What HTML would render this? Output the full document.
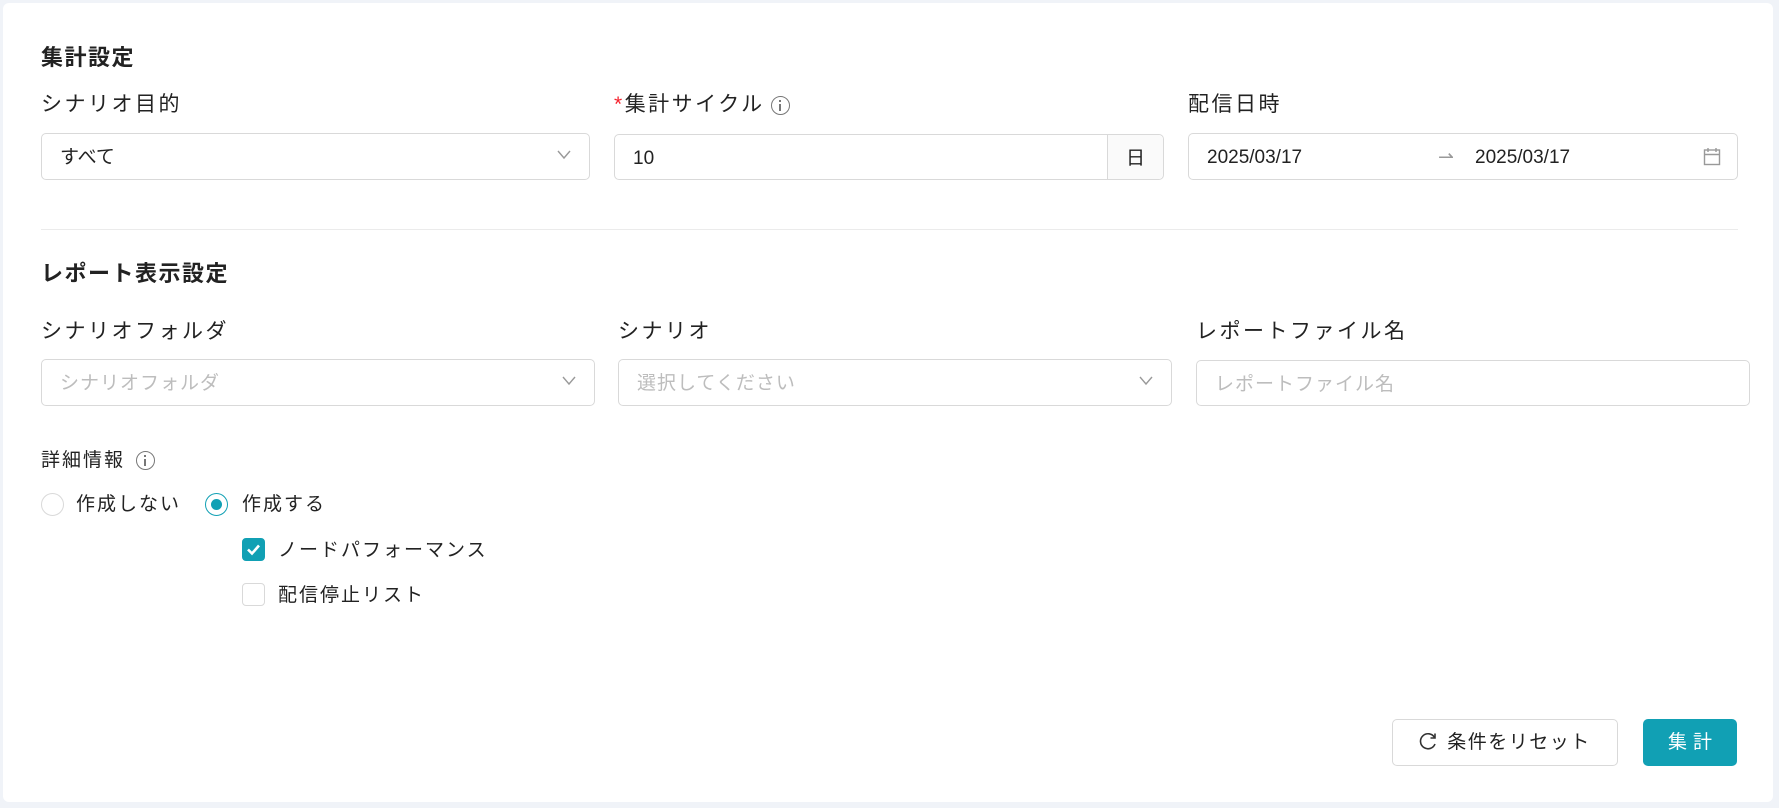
<!DOCTYPE html>
<html><head><meta charset="utf-8"><style>
*{box-sizing:border-box;margin:0;padding:0}
body{width:1779px;height:808px;background:#f0f3f8;font-family:"Liberation Sans","Noto Sans CJK JP",sans-serif;color:#222;position:relative;overflow:hidden}
.card{position:absolute;left:3px;top:3px;width:1770px;height:799px;background:#fff;border-radius:6px}
.a{position:absolute;white-space:nowrap}
.t{font-size:22px;font-weight:bold;line-height:28px;letter-spacing:1.5px}
.l{font-size:21px;line-height:26px;letter-spacing:2.5px}
.r{font-size:19px;line-height:26px;letter-spacing:2px}
.in{position:absolute;border:1px solid #d9d9d9;border-radius:5px;background:#fff;font-size:19px;line-height:44px;padding-left:18px;padding-top:2px}
.ph{color:#bdbdbd;letter-spacing:1px}
.chev{position:absolute;right:18px;top:16px}
.info{display:inline-block;width:19px;height:19px;border:1.5px solid #777;border-radius:50%;position:relative;vertical-align:middle}
.info:before{content:"";position:absolute;left:7px;top:3px;width:2px;height:2px;background:#777}
.info:after{content:"";position:absolute;left:7px;top:7px;width:2px;height:7px;background:#777}
.radio{position:absolute;width:23px;height:23px;border-radius:50%;border:1px solid #d9d9d9;background:#fff}
.cb{position:absolute;width:23px;height:23px;border-radius:4px;border:1px solid #d9d9d9;background:#fff}
</style></head><body>
<div class="card"></div>
<div class="a t" style="left:41px;top:44px">集計設定</div>
<div class="a l" style="left:41px;top:92px">シナリオ目的</div>
<div class="a l" style="left:614px;top:92px"><span style="color:#f5222d">*</span>集計サイクル<span class="info" style="margin-left:6px"></span></div>
<div class="a l" style="left:1188px;top:92px">配信日時</div>

<div class="in" style="left:41px;top:133px;width:549px;height:47px">すべて<svg class="chev" width="14" height="10" viewBox="0 0 14 10"><path d="M1 1l6 7 6-7" fill="none" stroke="#999" stroke-width="1.4"/></svg></div>
<div class="in" style="left:614px;top:134px;width:550px;height:46px">10<div style="position:absolute;right:0;top:0;width:56px;height:44px;background:#fafafa;border-left:1px solid #d9d9d9;border-radius:0 5px 5px 0;text-align:center;padding-top:2px">日</div></div>
<div class="in" style="left:1188px;top:133px;width:550px;height:47px">2025/03/17<span class="a" style="left:249px;color:#999">⇀</span><span class="a" style="left:286px">2025/03/17</span>
<svg class="a" style="right:16px;top:13px" width="18" height="19" viewBox="0 0 18 19"><rect x="1.5" y="3" width="15" height="14.5" fill="none" stroke="#999" stroke-width="1.4"/><path d="M1.5 7.5h15M5 1v4M13 1v4" stroke="#999" stroke-width="1.4"/></svg></div>

<div style="position:absolute;left:41px;top:229px;width:1697px;height:1px;background:#ebebeb"></div>
<div class="a t" style="left:41px;top:260px">レポート表示設定</div>
<div class="a l" style="left:41px;top:319px">シナリオフォルダ</div>
<div class="a l" style="left:618px;top:319px">シナリオ</div>
<div class="a l" style="left:1196px;top:319px">レポートファイル名</div>

<div class="in ph" style="left:41px;top:359px;width:554px;height:47px">シナリオフォルダ<svg class="chev" width="14" height="10" viewBox="0 0 14 10"><path d="M1 1l6 7 6-7" fill="none" stroke="#999" stroke-width="1.4"/></svg></div>
<div class="in ph" style="left:618px;top:359px;width:554px;height:47px">選択してください<svg class="chev" width="14" height="10" viewBox="0 0 14 10"><path d="M1 1l6 7 6-7" fill="none" stroke="#999" stroke-width="1.4"/></svg></div>
<div class="in ph" style="left:1196px;top:360px;width:554px;height:46px">レポートファイル名</div>

<div class="a r" style="left:41px;top:448px">詳細情報 <span class="info" style="margin-left:4px"></span></div>
<div class="radio" style="left:41px;top:493px"></div>
<div class="a r" style="left:76px;top:492px">作成しない</div>
<div class="radio" style="left:205px;top:493px;border-color:#11a0b4"><div style="position:absolute;left:5px;top:5px;width:11px;height:11px;border-radius:50%;background:#11a0b4"></div></div>
<div class="a r" style="left:242px;top:492px">作成する</div>
<div class="cb" style="left:242px;top:538px;background:#11a0b4;border-color:#11a0b4"><svg width="21" height="21" viewBox="0 0 21 21" style="position:absolute;left:0;top:0"><path d="M5 10.5l4 4 7-8" fill="none" stroke="#fff" stroke-width="2.6"/></svg></div>
<div class="a r" style="left:278px;top:538px">ノードパフォーマンス</div>
<div class="cb" style="left:242px;top:583px"></div>
<div class="a r" style="left:278px;top:583px">配信停止リスト</div>

<div class="a" style="left:1392px;top:719px;width:226px;height:47px;border:1px solid #d9d9d9;border-radius:5px;font-size:19px;line-height:45px;text-align:center;letter-spacing:1.5px"><svg width="18" height="18" viewBox="0 0 18 18" style="vertical-align:-2px;margin-right:10px"><path d="M15.5 5.5A7.5 7.5 0 1 0 16 12" fill="none" stroke="#333" stroke-width="1.6"/><path d="M16 1.5v4.5h-4.5" fill="none" stroke="#333" stroke-width="1.6"/></svg>条件をリセット</div>
<div class="a" style="left:1643px;top:719px;width:94px;height:47px;background:#11a0b4;border-radius:5px;color:#fff;font-size:19px;line-height:47px;text-align:center;letter-spacing:6px;padding-left:6px">集計</div>
</body></html>
